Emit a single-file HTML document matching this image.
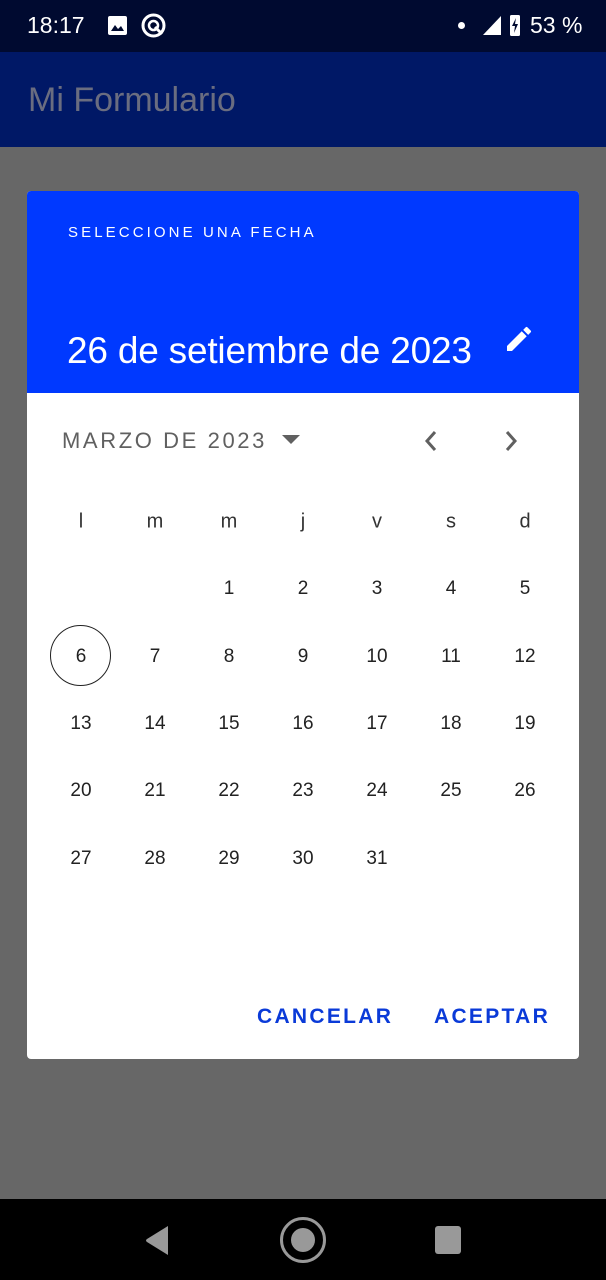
<!DOCTYPE html>
<html><head><meta charset="utf-8"><style>
*{margin:0;padding:0;box-sizing:border-box}
body{width:606px;height:1280px;position:relative;background:#676767;font-family:"Liberation Sans",Roboto,sans-serif;overflow:hidden}
.sb{position:absolute;left:0;top:0;width:606px;height:52px;background:#000a30;color:#fff;font-size:22px}
.ab{position:absolute;left:0;top:52px;width:606px;height:95px;background:#001866}
.ab span{position:absolute;left:28px;top:29px;font-size:34px;color:#6a6d80}
.nav{position:absolute;left:0;top:1199px;width:606px;height:81px;background:#000}
.dlg{position:absolute;left:27px;top:191px;width:552px;height:868px;background:#fff;border-radius:4px;overflow:hidden}
.hd{position:absolute;left:0;top:0;width:552px;height:202px;background:#0039ff;color:#fff}
.t{position:absolute;font-size:15px;letter-spacing:3.1px;left:41px;top:33px}
.d{position:absolute;font-size:37px;left:40px;top:139px;letter-spacing:-0.2px}
.c{position:absolute;width:74px;text-align:center;font-size:19px;color:#222;transform:translate(-50%,-50%)}
.w{color:#333;font-size:20px}
.btn{position:absolute;top:814px;font-size:21px;letter-spacing:2.3px;color:#0a3ad8;font-weight:bold}
</style></head><body>
<div class="sb">
<span style="position:absolute;left:27px;top:12px;font-size:23px">18:17</span>
<svg style="position:absolute;left:107px;top:15px" width="21" height="21"><rect x="1" y="1" width="19" height="19" rx="2" fill="#fff"/><path d="M4 16 L8 10 L11 14 L14 11 L17 16Z" fill="#000a30"/></svg>
<svg style="position:absolute;left:140px;top:12px" width="27" height="27"><circle cx="13.5" cy="13.5" r="10.5" fill="none" stroke="#fff" stroke-width="3"/><circle cx="13.5" cy="13.5" r="4.5" fill="none" stroke="#fff" stroke-width="2.5"/><path d="M15 15 L22 22" stroke="#fff" stroke-width="3"/></svg>
<div style="position:absolute;left:458px;top:22px;width:7px;height:7px;border-radius:50%;background:#fff"></div>
<svg style="position:absolute;left:481px;top:13px" width="44" height="24"><path d="M2 22 L20 3 L20 22Z" fill="#fff"/><rect x="29" y="2" width="10" height="21" rx="1.5" fill="#fff"/><path d="M35 5 L31 13 L34 13 L33 20 L37 11 L34 11Z" fill="#000a30"/></svg>
<span style="position:absolute;left:530px;top:12px;font-size:23px">53 %</span>
</div>
<div class="ab"><span>Mi Formulario</span></div>
<div class="dlg">
<div class="hd"><div class="t">SELECCIONE UNA FECHA</div><div class="d">26 de setiembre de 2023</div>
<svg style="position:absolute;left:474px;top:132px" width="36" height="32" viewBox="0 0 24 24"><path d="M3 17.25V21h3.75L17.81 9.94l-3.75-3.75L3 17.25zM20.71 7.04a1 1 0 0 0 0-1.41l-2.34-2.34a1 1 0 0 0-1.41 0l-1.83 1.83 3.75 3.75 1.83-1.83z" fill="#fff"/></svg></div>
<div style="position:absolute;left:35px;top:237px;font-size:22px;letter-spacing:2.6px;color:#606060">MARZO DE 2023</div>
<svg style="position:absolute;left:255px;top:244px" width="18" height="10"><path d="M0 0 L18 0 L9 9Z" fill="#606060"/></svg>
<svg style="position:absolute;left:394px;top:238px" width="20" height="24"><path d="M14 3 L6 12 L14 21" fill="none" stroke="#606060" stroke-width="3"/></svg>
<svg style="position:absolute;left:474px;top:238px" width="20" height="24"><path d="M6 3 L14 12 L6 21" fill="none" stroke="#606060" stroke-width="3"/></svg>
<div style="position:absolute;left:23px;top:434px;width:61px;height:61px;border:1.5px solid #222;border-radius:50%"></div>
<div class="btn" style="left:230px">CANCELAR</div>
<div class="btn" style="left:407px">ACEPTAR</div>
</div>
<div class="nav">
<svg style="position:absolute;left:144px;top:26px" width="26" height="32"><path d="M24 1 L24 30 L3 17 Q1 15.5 3 14Z" fill="#999"/></svg>
<svg style="position:absolute;left:279px;top:17px" width="48" height="48"><circle cx="24" cy="24" r="21.5" fill="none" stroke="#999" stroke-width="3"/><circle cx="24" cy="24" r="12" fill="#999"/></svg>
<div style="position:absolute;left:435px;top:27px;width:26px;height:28px;border-radius:3px;background:#999"></div>
</div>
<div style="position:absolute;left:0;top:0">
<div class="c w" style="left:81px;top:522px">l</div><div class="c w" style="left:155px;top:522px">m</div><div class="c w" style="left:229px;top:522px">m</div><div class="c w" style="left:303px;top:522px">j</div><div class="c w" style="left:377px;top:522px">v</div><div class="c w" style="left:451px;top:522px">s</div><div class="c w" style="left:525px;top:522px">d</div>
<div class="c" style="left:229px;top:589px">1</div><div class="c" style="left:303px;top:589px">2</div><div class="c" style="left:377px;top:589px">3</div><div class="c" style="left:451px;top:589px">4</div><div class="c" style="left:525px;top:589px">5</div>
<div class="c" style="left:81px;top:657px">6</div><div class="c" style="left:155px;top:657px">7</div><div class="c" style="left:229px;top:657px">8</div><div class="c" style="left:303px;top:657px">9</div><div class="c" style="left:377px;top:657px">10</div><div class="c" style="left:451px;top:657px">11</div><div class="c" style="left:525px;top:657px">12</div>
<div class="c" style="left:81px;top:724px">13</div><div class="c" style="left:155px;top:724px">14</div><div class="c" style="left:229px;top:724px">15</div><div class="c" style="left:303px;top:724px">16</div><div class="c" style="left:377px;top:724px">17</div><div class="c" style="left:451px;top:724px">18</div><div class="c" style="left:525px;top:724px">19</div>
<div class="c" style="left:81px;top:791px">20</div><div class="c" style="left:155px;top:791px">21</div><div class="c" style="left:229px;top:791px">22</div><div class="c" style="left:303px;top:791px">23</div><div class="c" style="left:377px;top:791px">24</div><div class="c" style="left:451px;top:791px">25</div><div class="c" style="left:525px;top:791px">26</div>
<div class="c" style="left:81px;top:859px">27</div><div class="c" style="left:155px;top:859px">28</div><div class="c" style="left:229px;top:859px">29</div><div class="c" style="left:303px;top:859px">30</div><div class="c" style="left:377px;top:859px">31</div>
</div>
</body></html>
